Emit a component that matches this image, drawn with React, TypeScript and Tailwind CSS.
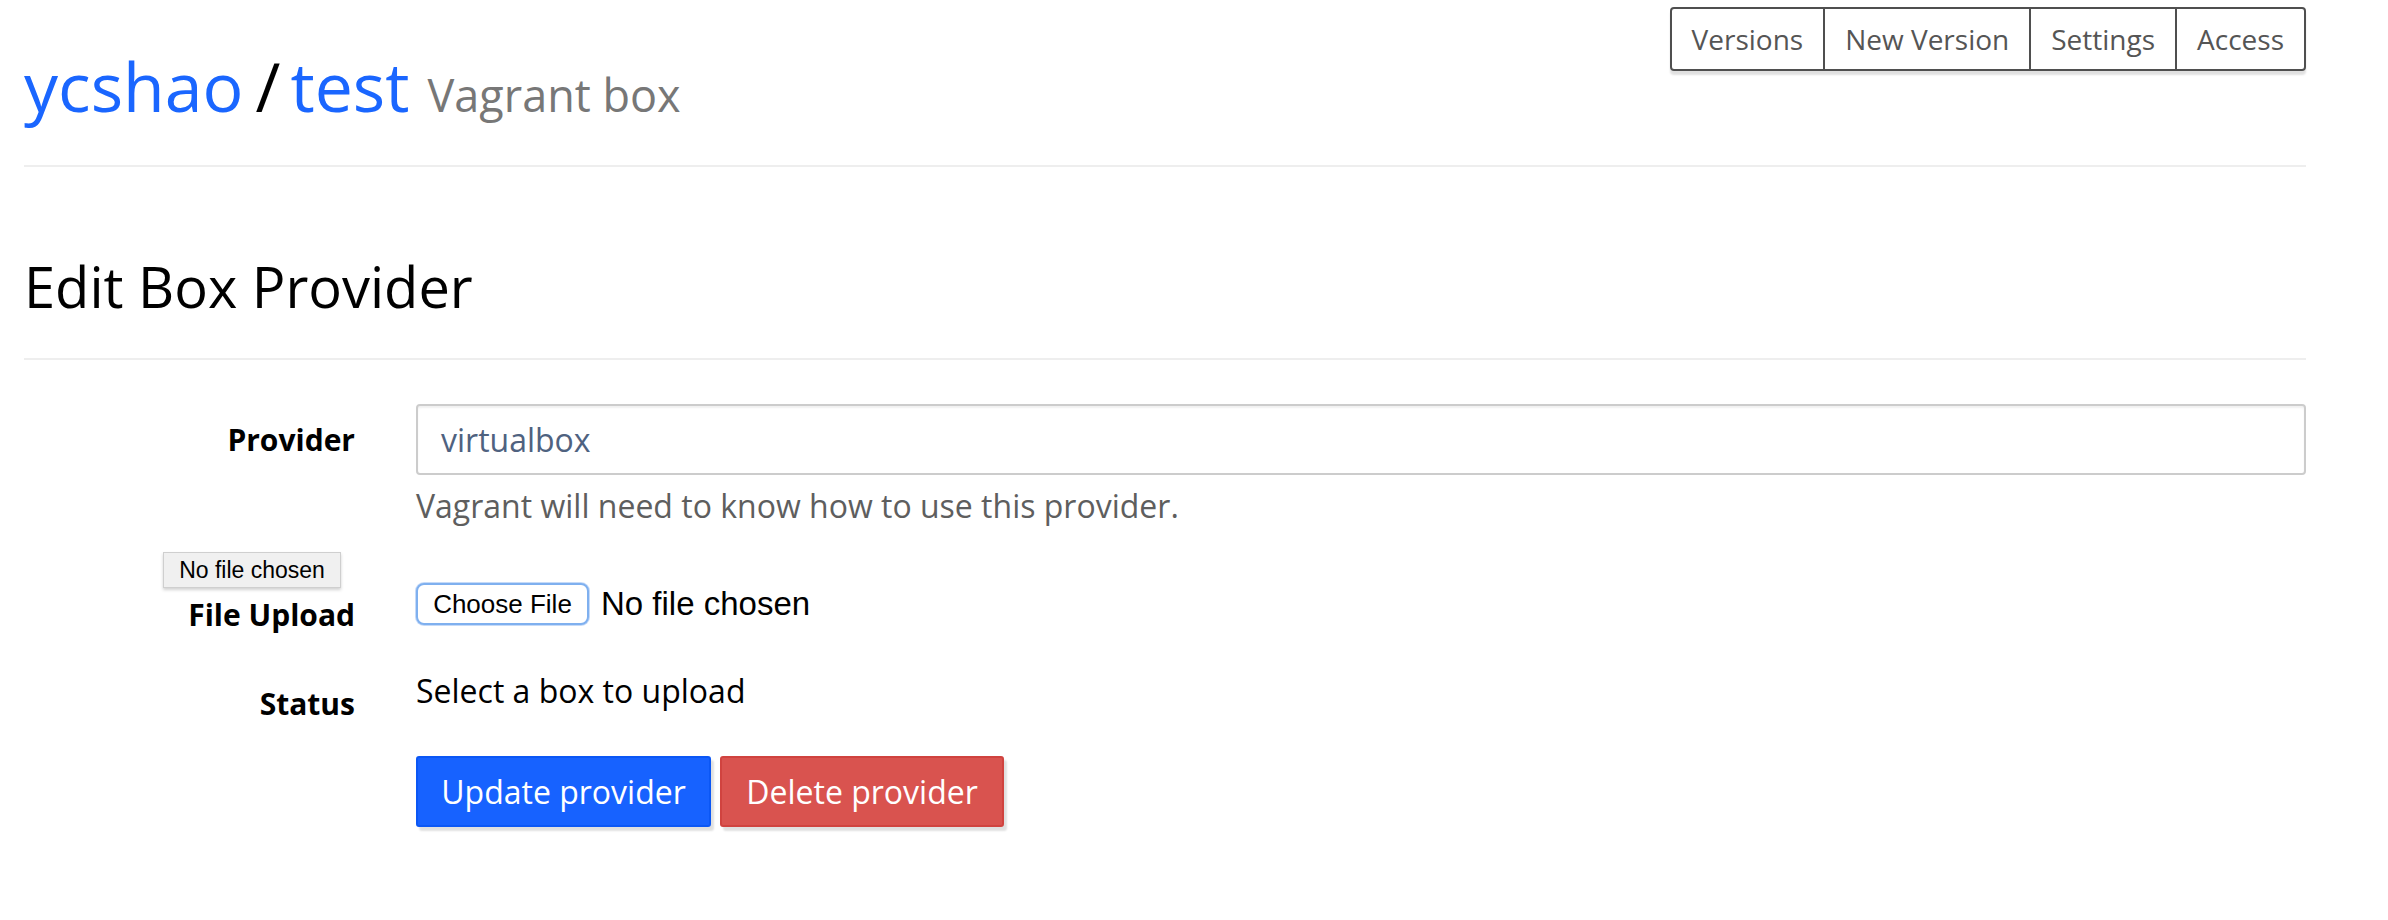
import React from "react";

const navItems = ["Versions", "New Version", "Settings", "Access"];

export default function App() {
  return (
    <div className="min-h-[920px] bg-white font-['Open_Sans',sans-serif] text-black">
      <div className="ml-[24px] w-[2282px]">
        {/* page header */}
        <div className="flex items-start justify-between border-b-2 border-[#eeeeee] pb-[33px]">
          <h1 className="mt-[49px] flex items-baseline whitespace-nowrap text-[68px] font-normal leading-[74px]">
            <a href="#" className="text-[#1a66ff]">ycshao</a>
            <span className="ml-[12px] text-black">/</span>
            <a href="#" className="ml-[10px] text-[#1a66ff]">test</a>
            <small className="ml-[18px] text-[45px] text-[#777777]">Vagrant box</small>
          </h1>
          <div className="mt-[7px] flex rounded-[4px] border-2 border-[#4f4f4f] shadow-[0_4px_2px_rgba(0,0,0,0.12)]">
            {navItems.map((item, i) => (
              <button
                key={item}
                className={`flex h-[60px] items-center px-[20px] text-[28px] text-[#555555] ${i > 0 ? "border-l-2 border-[#4f4f4f]" : ""}`}
              >
                {item}
              </button>
            ))}
          </div>
        </div>

        {/* section heading */}
        <h2 className="mt-[88px] border-b-2 border-[#eeeeee] pb-[41px] text-[56px] font-normal leading-[62px]">
          Edit Box Provider
        </h2>

        {/* form */}
        <div className="mt-[44px]">
          {/* Provider */}
          <div className="flex items-center">
            <label className="w-[331px] text-right text-[30px] font-bold leading-[44px]">Provider</label>
            <div className="ml-[61px] flex-1">
              <div className="flex h-[71px] items-center rounded-[4px] border-2 border-[#cccccc] px-[23px] text-[32px] text-[#4f6280] shadow-[inset_0_2px_2px_rgba(0,0,0,0.06)]">
                virtualbox
              </div>
            </div>
          </div>
          <div className="flex">
            <div className="w-[331px]" />
            <p className="ml-[61px] mt-[9px] text-[32px] leading-[44px] text-[#5e5e5e]">
              Vagrant will need to know how to use this provider.
            </p>
          </div>

          {/* File upload */}
          <div className="relative mt-[55px] flex items-start">
            <label className="w-[331px] pt-[11px] text-right text-[30px] font-bold leading-[42px]">File Upload</label>
            <div className="ml-[61px] flex items-center">
              <button className="flex h-[42px] w-[173px] items-center justify-center rounded-[8px] border-2 border-[#7fb0ef] bg-white font-['Liberation_Sans',Arial,sans-serif] text-[26px] text-black shadow-[0_0_0_1px_rgba(126,174,240,0.45)]">
                Choose File
              </button>
              <span className="ml-[12px] font-['Liberation_Sans',Arial,sans-serif] text-[33px] leading-[42px] text-black">
                No file chosen
              </span>
            </div>
            <div className="absolute left-[139px] top-[-31px] flex h-[36px] w-[178px] items-center justify-center border border-[#cfcfcf] bg-[#f0f0f0] font-['Liberation_Sans',Arial,sans-serif] text-[23px] text-black shadow-[0_2px_3px_rgba(0,0,0,0.18)]">
              No file chosen
            </div>
          </div>

          {/* Status */}
          <div className="mt-[33px] flex items-start">
            <label className="w-[331px] pt-[13px] text-right text-[30px] font-bold leading-[44px]">Status</label>
            <div className="ml-[61px] text-[32px] leading-[44px] text-black">Select a box to upload</div>
          </div>

          {/* Actions */}
          <div className="mt-[30px] flex">
            <div className="w-[331px]" />
            <div className="ml-[61px] flex gap-[9px]">
              <button className="h-[71px] w-[295px] rounded-[3px] border-2 border-[#0b57f5] bg-[#1762ff] text-[32px] text-white shadow-[3px_4px_2px_rgba(0,0,0,0.12)]">
                Update provider
              </button>
              <button className="h-[71px] w-[284px] rounded-[3px] border-2 border-[#d0433f] bg-[#d9534f] text-[32px] text-white shadow-[3px_4px_2px_rgba(0,0,0,0.12)]">
                Delete provider
              </button>
            </div>
          </div>
        </div>
      </div>
    </div>
  );
}
